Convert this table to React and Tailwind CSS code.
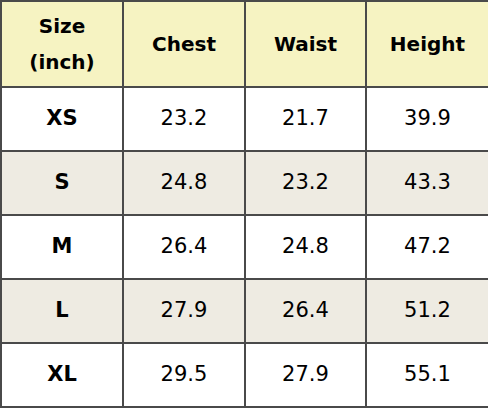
import React from 'react';

const rows = [
    { size: 'XS', chest: '23.2', waist: '21.7', height: '39.9' },
    { size: 'S', chest: '24.8', waist: '23.2', height: '43.3' },
    { size: 'M', chest: '26.4', waist: '24.8', height: '47.2' },
    { size: 'L', chest: '27.9', waist: '26.4', height: '51.2' },
    { size: 'XL', chest: '29.5', waist: '27.9', height: '55.1' },
];

const headFont = { fontFamily: '"Comic Sans MS", "DejaVu Sans", sans-serif' };

export default function App() {
    return (
        <div className="w-[488px] h-[408px] bg-white">
            <table className="w-[488px] border-collapse table-fixed">
                <colgroup>
                    <col className="w-[122px]" />
                    <col className="w-[122px]" />
                    <col className="w-[121px]" />
                    <col className="w-[123px]" />
                </colgroup>
                <thead>
                    <tr className="h-[86px] bg-[#f6f3c2]">
                        <th className="border-2 border-[#4a4a4a] p-0 text-center font-bold text-[20px] leading-[36px] text-black" style={headFont}>
                            Size<br />(inch)
                        </th>
                        <th className="border-2 border-[#4a4a4a] p-0 text-center font-bold text-[20px] text-black" style={headFont}>Chest</th>
                        <th className="border-2 border-[#4a4a4a] p-0 text-center font-bold text-[20px] text-black" style={headFont}>Waist</th>
                        <th className="border-2 border-[#4a4a4a] p-0 text-center font-bold text-[20px] text-black" style={headFont}>Height</th>
                    </tr>
                </thead>
                <tbody>
                    {rows.map((r, i) => (
                        <tr key={r.size} className={i % 2 === 1 ? 'h-[64px] bg-[#eeebe2]' : 'h-[64px] bg-white'}>
                            <td className="border-2 border-[#4a4a4a] p-0 text-center font-bold text-[21px] text-black" style={headFont}>{r.size}</td>
                            <td className="border-2 border-[#4a4a4a] p-0 text-center text-[21px] text-black font-['DejaVu_Sans',sans-serif]">{r.chest}</td>
                            <td className="border-2 border-[#4a4a4a] p-0 text-center text-[21px] text-black font-['DejaVu_Sans',sans-serif]">{r.waist}</td>
                            <td className="border-2 border-[#4a4a4a] p-0 text-center text-[21px] text-black font-['DejaVu_Sans',sans-serif]">{r.height}</td>
                        </tr>
                    ))}
                </tbody>
            </table>
        </div>
    );
}
